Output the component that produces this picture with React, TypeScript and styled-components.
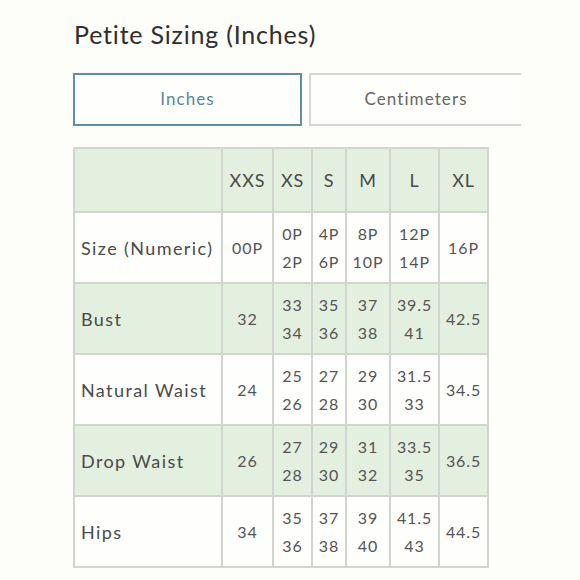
import React from "react";
import styled, { createGlobalStyle } from "styled-components";

const Global = createGlobalStyle`
  html, body { margin: 0; padding: 0; background: #fdfdf9; }
  body { font-family: Lato, "Noto Sans", sans-serif; color: #444; }
`;

const Page = styled.div`
  width: 580px;
  height: 580px;
  overflow: hidden;
  padding: 18px 0 0 73px;
  box-sizing: border-box;
  display: flex;
  flex-direction: column;
`;

const Title = styled.h1`
  margin: 0 0 0 1px;
  font-weight: 400;
  font-size: 25px;
  line-height: 32px;
  letter-spacing: 0.8px;
  color: #2e2e2e;
`;

const Tabs = styled.div`
  display: flex;
  gap: 7px;
  margin-top: 23px;
`;

const Tab = styled.div<{ $active?: boolean; $w: number }>`
  box-sizing: border-box;
  width: ${(p) => p.$w}px;
  height: 53px;
  display: flex;
  align-items: center;
  justify-content: center;
  font-size: 17px;
  letter-spacing: 1.1px;
  color: ${(p) => (p.$active ? "#5a8793" : "#666")};
  border: 2px solid ${(p) => (p.$active ? "#5f8fa0" : "#d6d6d3")};
  border-right-width: ${(p) => (p.$active ? "2px" : "0")};
  background: #fefefc;
  padding-bottom: 2px;
`;

const Grid = styled.div`
  margin-top: 21px;
  display: grid;
  grid-template-columns: 146px 49px 37px 32px 42px 47px 47px;
  grid-template-rows: 62px repeat(5, 69px);
  gap: 2px;
  padding: 2px;
  background: #d2d4d0;
  width: max-content;
`;

const Cell = styled.div<{ $green?: boolean; $label?: boolean; $head?: boolean }>`
  background: ${(p) => (p.$green ? "#e3efdf" : "#fefefc")};
  display: flex;
  flex-direction: column;
  justify-content: center;
  align-items: ${(p) => (p.$label ? "flex-start" : "center")};
  padding-left: ${(p) => (p.$label ? "6px" : "0")};
  font-size: ${(p) => (p.$label || p.$head ? "18px" : "16px")};
  letter-spacing: ${(p) => (p.$label ? "1.4px" : "0.9px")};
  color: ${(p) => (p.$label || p.$head ? "#4a4a4a" : "#555")};
  line-height: 28px;
  white-space: nowrap;
`;

type Row = { label: string; vals: string[][] };

const heads = ["XXS", "XS", "S", "M", "L", "XL"];
const rows: Row[] = [
  { label: "Size (Numeric)", vals: [["00P"], ["0P", "2P"], ["4P", "6P"], ["8P", "10P"], ["12P", "14P"], ["16P"]] },
  { label: "Bust", vals: [["32"], ["33", "34"], ["35", "36"], ["37", "38"], ["39.5", "41"], ["42.5"]] },
  { label: "Natural Waist", vals: [["24"], ["25", "26"], ["27", "28"], ["29", "30"], ["31.5", "33"], ["34.5"]] },
  { label: "Drop Waist", vals: [["26"], ["27", "28"], ["29", "30"], ["31", "32"], ["33.5", "35"], ["36.5"]] },
  { label: "Hips", vals: [["34"], ["35", "36"], ["37", "38"], ["39", "40"], ["41.5", "43"], ["44.5"]] },
];

export default function App() {
  return (
    <>
      <Global />
      <Page>
        <Title>Petite Sizing (Inches)</Title>
        <Tabs>
          <Tab $active $w={229}>Inches</Tab>
          <Tab $w={212}>Centimeters</Tab>
        </Tabs>
        <Grid>
          <Cell $green $head />
          {heads.map((h) => (
            <Cell key={h} $green $head>{h}</Cell>
          ))}
          {rows.map((r, i) => {
            const g = i % 2 === 1;
            return (
              <React.Fragment key={r.label}>
                <Cell $green={g} $label>{r.label}</Cell>
                {r.vals.map((v, j) => (
                  <Cell key={j} $green={g}>
                    {v.map((t) => (
                      <span key={t}>{t}</span>
                    ))}
                  </Cell>
                ))}
              </React.Fragment>
            );
          })}
        </Grid>
      </Page>
    </>
  );
}
